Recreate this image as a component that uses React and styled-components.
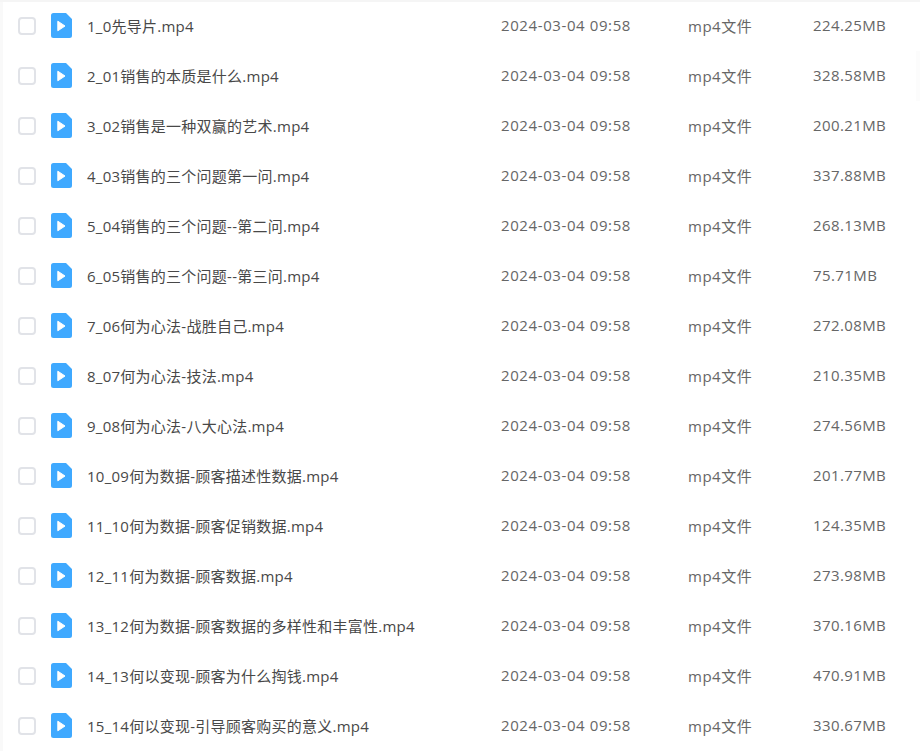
import React from "react";
import styled, { createGlobalStyle } from "styled-components";

const Global = createGlobalStyle`
  html, body { margin: 0; padding: 0; background: #fff; }
  body { width: 920px; height: 751px; overflow: hidden; }
`;

const Page = styled.div`
  height: 751px;
  overflow: hidden;
  box-sizing: border-box;
  padding-top: 1px;
  background: #fff;
  box-shadow: inset 0 2px 0 #f5f5f5, inset 3px 0 0 #f9f9f9;
  font-family: "Open Sans", "Noto Sans CJK SC", sans-serif;
  font-size: 15px;
`;

const Row = styled.div`
  display: grid;
  grid-template-columns: 51px 36px 414px 187px 125px 1fr;
  align-items: center;
  height: 50px;
  box-shadow: ${(p) => (p.$shaded ? "inset -4px 0 0 #fcfcfc" : "none")};
`;

const Check = styled.span`
  justify-self: end;
  margin-right: 15px;
  box-sizing: border-box;
  width: 18px;
  height: 18px;
  border: 2px solid #e1e3e8;
  border-radius: 4px;
  background: #fff;
`;

const Icon = styled.svg`
  display: block;
  width: 21px;
  height: 25px;
  margin-bottom: 1px;
`;

const Name = styled.span`
  color: #484848;
  white-space: nowrap;
  letter-spacing: 0.25px;
  padding-bottom: 2px;
`;

const DateCell = styled.span`
  color: #666;
  white-space: nowrap;
  letter-spacing: 0.6px;
  padding-bottom: 2px;
`;

const TypeCell = styled(DateCell)`
  letter-spacing: 0.5px;
`;

const SizeCell = styled(DateCell)`
  letter-spacing: 0.4px;
`;

const FileIcon = () => (
  <Icon viewBox="0 0 21 25">
    <path d="M2.5 0H15L21 6V22.5A2.5 2.5 0 0 1 18.5 25H2.5A2.5 2.5 0 0 1 0 22.5V2.5A2.5 2.5 0 0 1 2.5 0Z" fill="#3fa9ff" />
    <path d="M6.8 8.2L14 13L6.8 17.8Z" fill="#fff" stroke="#fff" strokeWidth="1" strokeLinejoin="round" />
  </Icon>
);

const files = [
  ["1_0先导片.mp4", "224.25MB"],
  ["2_01销售的本质是什么.mp4", "328.58MB"],
  ["3_02销售是一种双赢的艺术.mp4", "200.21MB"],
  ["4_03销售的三个问题第一问.mp4", "337.88MB"],
  ["5_04销售的三个问题--第二问.mp4", "268.13MB"],
  ["6_05销售的三个问题--第三问.mp4", "75.71MB"],
  ["7_06何为心法-战胜自己.mp4", "272.08MB"],
  ["8_07何为心法-技法.mp4", "210.35MB"],
  ["9_08何为心法-八大心法.mp4", "274.56MB"],
  ["10_09何为数据-顾客描述性数据.mp4", "201.77MB"],
  ["11_10何为数据-顾客促销数据.mp4", "124.35MB"],
  ["12_11何为数据-顾客数据.mp4", "273.98MB"],
  ["13_12何为数据-顾客数据的多样性和丰富性.mp4", "370.16MB"],
  ["14_13何以变现-顾客为什么掏钱.mp4", "470.91MB"],
  ["15_14何以变现-引导顾客购买的意义.mp4", "330.67MB"],
];

export default function App() {
  return (
    <>
      <Global />
      <Page>
        {files.map(([name, size], i) => (
          <Row key={name} $shaded={i === 1}>
            <Check />
            <FileIcon />
            <Name>{name}</Name>
            <DateCell>2024-03-04 09:58</DateCell>
            <TypeCell>mp4文件</TypeCell>
            <SizeCell>{size}</SizeCell>
          </Row>
        ))}
      </Page>
    </>
  );
}
